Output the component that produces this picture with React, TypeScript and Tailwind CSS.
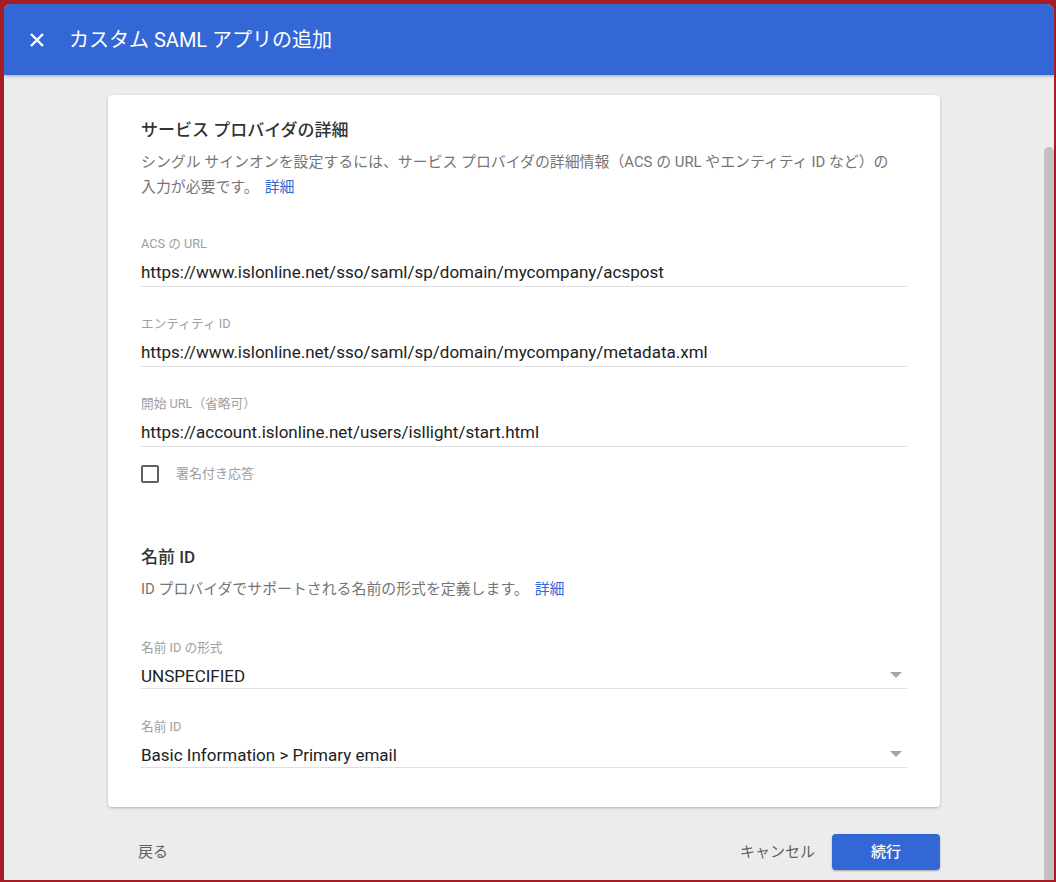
import type { ReactNode } from "react";

const font = "font-['Roboto','Noto_Sans_CJK_JP',sans-serif]";

function TextField({ label, value, select }: { label: string; value: string; select?: boolean }) {
  return (
    <div>
      <div className="text-[12.7px] leading-[16px] text-[#9e9e9e]">{label}</div>
      <div className={`mt-[8px] flex items-center border-b border-[#e0e0e0] ${select ? "pb-0" : "pb-[2px]"}`}>
        <span className="flex-1 text-[17px] leading-[24px] text-[#212121]">{value}</span>
        {select ? (
          <svg width="12" height="6" viewBox="0 0 12 6" className="mr-[5px] -mt-[2px]">
            <path d="M0 0h12L6 6z" fill="#a6a6a6" />
          </svg>
        ) : null}
      </div>
    </div>
  );
}

function Section({ title, children }: { title: string; children: ReactNode }) {
  return (
    <div>
      <h2 className="text-[17px] font-medium leading-[24px] text-[#333333]">{title}</h2>
      <p className="mt-[8px] max-w-[758px] text-[14.9px] leading-[25px] text-[#757575]">{children}</p>
    </div>
  );
}

export default function App() {
  return (
    <div className={`${font} h-[882px] w-[1056px] bg-[#a51c24] pb-[2px] pl-[4px] pr-[2px] pt-[4px]`}>
      <div className="flex h-full flex-col overflow-hidden rounded-tl-[6px] rounded-tr-[8px] bg-[#ececec]">
        <header className="relative z-10 flex h-[71px] shrink-0 items-center bg-[#3367d6] pl-[25px] shadow-[0_1px_3px_rgba(0,0,0,0.3)]">
          <svg width="14" height="14" viewBox="0 0 14 14" className="ml-[1px]">
            <path d="M1 1l12 12M13 1L1 13" stroke="#ffffff" strokeWidth="2.4" />
          </svg>
          <h1 className="ml-[25px] text-[20px] leading-[28px] text-white">カスタム SAML アプリの追加</h1>
        </header>

        <div className="flex flex-1">
          <main className="flex-1">
            <div className="mx-auto mt-[20px] h-[712px] w-[832px] rounded-[4px] bg-white px-[33px] pt-[23px] shadow-[0_1px_3px_rgba(0,0,0,0.25)]">
              <Section title="サービス プロバイダの詳細">
                シングル サインオンを設定するには、サービス プロバイダの詳細情報（ACS の URL やエンティティ ID など）の入力が必要です。
                <a className="ml-[6px] text-[#3367d6]">詳細</a>
              </Section>

              <div className="mt-[36px] flex flex-col gap-[29px]">
                <TextField label="ACS の URL" value="https://www.islonline.net/sso/saml/sp/domain/mycompany/acspost" />
                <TextField label="エンティティ ID" value="https://www.islonline.net/sso/saml/sp/domain/mycompany/metadata.xml" />
                <TextField label="開始 URL（省略可）" value="https://account.islonline.net/users/isllight/start.html" />
              </div>

              <label className="mt-[18px] flex items-center">
                <span className="h-[18px] w-[18px] rounded-[2px] border-2 border-[#616161]" />
                <span className="ml-[17px] text-[13px] leading-[18px] text-[#9e9e9e]">署名付き応答</span>
              </label>

              <div className="mt-[62px]">
                <Section title="名前 ID">
                  ID プロバイダでサポートされる名前の形式を定義します。
                  <a className="ml-[6px] text-[#3367d6]">詳細</a>
                </Section>
              </div>

              <div className="mt-[38px] flex flex-col gap-[30px]">
                <TextField label="名前 ID の形式" value="UNSPECIFIED" select />
                <TextField label="名前 ID" value="Basic Information > Primary email" select />
              </div>
            </div>

            <div className="mx-auto mt-[27px] flex w-[832px] items-center">
              <button className="ml-[30px] text-[15px] text-[#616161]">戻る</button>
              <div className="flex-1" />
              <button className="mr-[17px] text-[15px] text-[#616161]">キャンセル</button>
              <button className="h-[36px] w-[108px] rounded-[4px] bg-[#3367d6] text-[15px] font-medium text-white shadow-[0_1px_2px_rgba(0,0,0,0.3)]">
                続行
              </button>
            </div>
          </main>

          <div className="w-[10px] pt-[72px]">
            <div className="h-full rounded-t-[5px] bg-[#c1c1c1]" />
          </div>
        </div>
      </div>
    </div>
  );
}
